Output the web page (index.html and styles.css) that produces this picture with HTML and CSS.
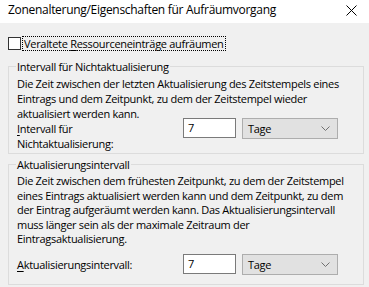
FILE: index.html
```html
<!DOCTYPE html>
<html lang="de">
<head>
<meta charset="utf-8">
<link rel="stylesheet" href="styles.css">
</head>
<body>
<div class="titlebar">
  <span class="title">Zonenalterung/Eigenschaften für Aufräumvorgang</span>
  <svg class="close" width="11" height="11" viewBox="0 0 11 11"><path d="M0.5 0.5 L10.5 10.5 M10.5 0.5 L0.5 10.5" stroke="#000" stroke-width="1" fill="none"/></svg>
</div>
<div class="content">
  <div class="check-row">
    <span class="checkbox"></span>
    <span class="check-label">Veraltete <u>R</u>essourceneinträge aufräumen</span>
  </div>
  <fieldset class="group group-1">
    <legend>Intervall für Nichtaktualisierung</legend>
    <p class="desc">Die Zeit zwischen der letzten Aktualisierung des Zeitstempels eines<br>Eintrags und dem Zeitpunkt, zu dem der Zeitstempel wieder<br>aktualisiert werden kann.</p>
    <div class="row">
      <span class="row-label"><u>I</u>ntervall für<br>Nichtaktualisierung:</span>
      <span class="input">7</span>
      <span class="combo">Tage<svg class="chev" width="9" height="5" viewBox="0 0 9 5"><path d="M0.5 0.5 L4.5 4.5 L8.5 0.5" stroke="#707070" stroke-width="1" fill="none"/></svg></span>
    </div>
  </fieldset>
  <fieldset class="group group-2">
    <legend>Aktualisierungsintervall</legend>
    <p class="desc">Die Zeit zwischen dem frühesten Zeitpunkt, zu dem der Zeitstempel<br>eines Eintrags aktualisiert werden kann und dem Zeitpunkt, zu dem<br>der Eintrag aufgeräumt werden kann. Das Aktualisierungsintervall<br>muss länger sein als der maximale Zeitraum der<br>Eintragsaktualisierung.</p>
    <div class="row row-2">
      <span class="row-label"><u>A</u>ktualisierungsintervall:</span>
      <span class="input">7</span>
      <span class="combo">Tage<svg class="chev" width="9" height="5" viewBox="0 0 9 5"><path d="M0.5 0.5 L4.5 4.5 L8.5 0.5" stroke="#707070" stroke-width="1" fill="none"/></svg></span>
    </div>
  </fieldset>
</div>
</body>
</html>
```
FILE: styles.css
```css
* { box-sizing: border-box; }
html, body {
  margin: 0;
  background: #f0f0f0;
  font-family: "Open Sans", "Noto Sans", sans-serif;
  font-size: 11px;
  letter-spacing: -0.3px;
  color: #000;
}
.titlebar {
  height: 23px;
  background: #fff;
  display: flex;
  align-items: center;
  justify-content: space-between;
  padding: 0 12px 3px 8px;
}
.title {
  font-size: 12px;
  line-height: 16px;
  letter-spacing: -0.3px;
}
.close { display: block; }
.content {
  padding: 0 5px 0 8px;
}
.check-row {
  display: flex;
  align-items: center;
  margin-top: 13px;
  height: 15px;
}
.checkbox {
  width: 13px;
  height: 13px;
  border: 1px solid #333;
  background: #fff;
  margin-right: 1px;
}
.check-label {
  border: 1px dotted #000;
  padding: 0 1px;
  line-height: 13px;
}
u { text-decoration: underline; text-underline-offset: 2px; }
.group {
  margin: 0;
  border: 1px solid #dcdcdc;
  padding: 0 8px 0 7px;
  min-width: 0;
}
.group legend {
  padding: 0 1px;
  line-height: 15px;
}
.group-1 { margin-top: 8px; padding-bottom: 2px; }
.group-2 { margin-top: 3px; padding-bottom: 9px; }
.desc {
  margin: 2px 0 0 1px;
  line-height: 15px;
  white-space: nowrap;
}
.group-2 .desc { margin-top: 2px; line-height: 14.5px; }
.row {
  display: flex;
  align-items: flex-start;
  margin-left: 1px;
  line-height: 15px;
}
.row-label {
  width: 166px;
  flex: none;
}
.input {
  width: 53px;
  height: 20px;
  border: 1px solid #7a7a7a;
  background: #fff;
  padding-left: 4px;
  line-height: 18px;
  margin-top: -3px;
  flex: none;
}
.combo {
  width: 96px;
  height: 21px;
  margin-left: 6px;
  margin-top: -3px;
  border: 1px solid #adadad;
  background: #e1e1e1;
  padding: 0 7px 0 5px;
  line-height: 19px;
  display: flex;
  align-items: center;
  justify-content: space-between;
  flex: none;
}
.row-2 { margin-top: 7px; }
.row-2 .row-label { margin-top: 3px; }
.row-2 .input, .row-2 .combo { margin-top: 0; }
```
